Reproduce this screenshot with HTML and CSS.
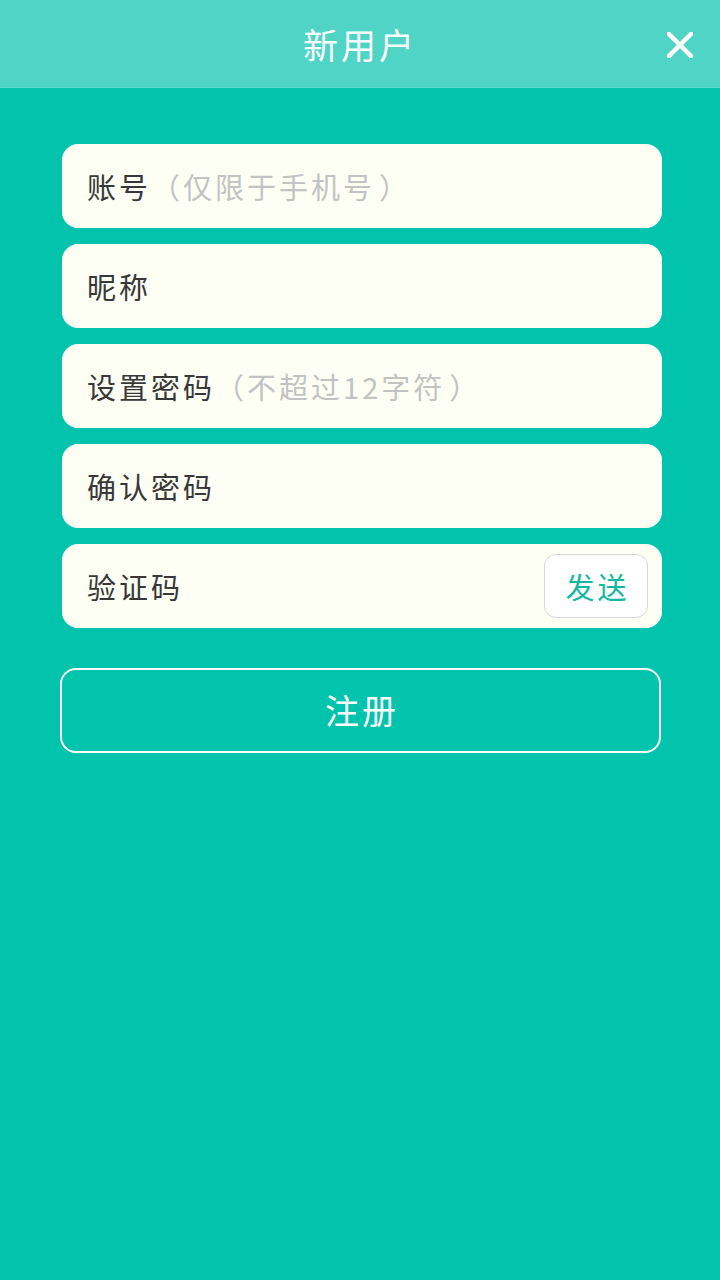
FILE: index.html
```html
<!DOCTYPE html>
<html lang="zh-CN">
<head>
<meta charset="utf-8">
<link rel="stylesheet" href="styles.css">
</head>
<body>
<div class="page">
  <header class="topbar">
    <h1 class="title">新用户</h1>
    <svg class="close" viewBox="0 0 26 26" width="26" height="26"><path d="M2 2 L24 24 M24 2 L2 24" stroke="#fff" stroke-width="4.5" stroke-linecap="square"/></svg>
  </header>
  <main class="form">
    <div class="field"><span class="label">账号</span><span class="hint"><span class="paren-open">（</span>仅限于手机号<span class="paren-close">）</span></span></div>
    <div class="field"><span class="label">昵称</span></div>
    <div class="field"><span class="label">设置密码</span><span class="hint"><span class="paren-open">（</span>不超过12字符<span class="paren-close">）</span></span></div>
    <div class="field"><span class="label">确认密码</span></div>
    <div class="field field-code"><span class="label">验证码</span><button class="send">发送</button></div>
    <button class="submit">注册</button>
  </main>
</div>
</body>
</html>
```

FILE: styles.css
```css
* { box-sizing: border-box; }
html, body { margin: 0; padding: 0; }
body {
  background: #02c3ab;
  font-family: "Noto Sans CJK SC", "Noto Sans", sans-serif;
}
.page { width: 720px; min-height: 1280px; background: #02c3ab; }
.topbar {
  position: relative;
  height: 88px;
  background: #50d4c5;
  display: flex;
  align-items: center;
  justify-content: center;
  border-bottom: 1px solid #5ed8ca;
}
.title {
  margin: 0;
  font-size: 35px;
  font-weight: 400;
  letter-spacing: 3px;
  color: #fff;
}
.close { position: absolute; right: 27px; top: 32px; }
.form {
  padding: 56px 58px 0 62px;
  display: flex;
  flex-direction: column;
  gap: 16px;
}
.field {
  width: 600px;
  height: 84px;
  background: #fdfff4;
  border-radius: 16px;
  display: flex;
  align-items: center;
  padding: 0 14px 0 25px;
  font-size: 29px;
  letter-spacing: 3px;
}
.label { color: #383838; }
.hint { color: #c3c3c3; }
.paren-open { letter-spacing: 3px; }
.paren-close { padding-left: 4px; }
.field-code { justify-content: space-between; }
.send {
  width: 104px;
  height: 64px;
  background: #fff;
  border: 1px solid #d8d8d8;
  border-radius: 12px;
  color: #14b8a0;
  font-family: inherit;
  font-size: 29px;
  letter-spacing: 3px;
  padding: 0 0 0 3px;
}
.submit {
  margin: 24px 0 0 -2px;
  width: 601px;
  height: 85px;
  background: transparent;
  border: 2px solid #fff;
  border-radius: 16px;
  color: #fff;
  font-family: inherit;
  font-size: 34px;
  letter-spacing: 3px;
  padding: 0 0 2px 3px;
}
```
